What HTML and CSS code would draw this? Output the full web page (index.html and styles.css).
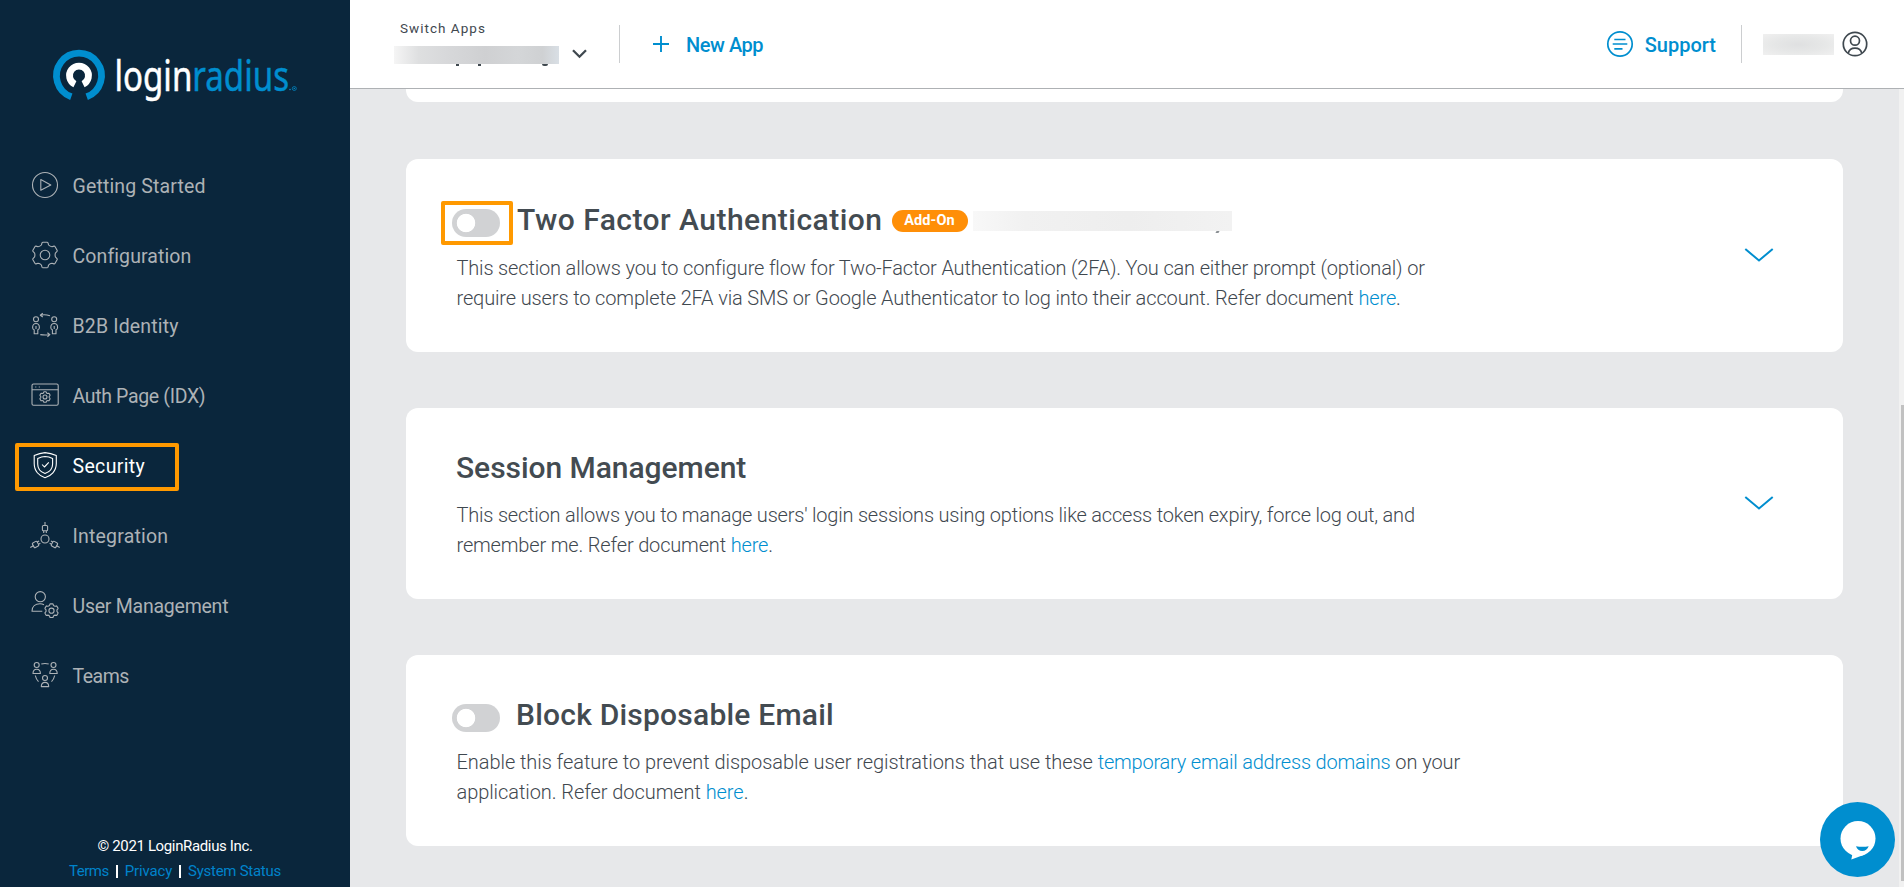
FILE: index.html
```html
<!DOCTYPE html>
<html lang="en">
<head>
<meta charset="utf-8">
<title>LoginRadius - Security</title>
<link rel="stylesheet" href="styles.css">
</head>
<body>
<svg class="defs" aria-hidden="true">
  <symbol id="gear" viewBox="-14 -14 28 28" overflow="visible">
    <path vector-effect="non-scaling-stroke" d="M-3 -12.2Q-2.8 -12.8 -2 -12.8H2Q2.8 -12.8 3 -12.2L3.6 -10Q5 -8.4 6.9 -8.3L9 -8.9Q9.7 -9 10.1 -8.3L12.1 -4.8Q12.4 -4.1 12 -3.6L10.4 -1.9Q9.8 0 10.4 1.9L12 3.6Q12.4 4.1 12.1 4.8L10.1 8.3Q9.7 9 9 8.9L6.9 8.3Q5 8.4 3.6 10L3 12.2Q2.8 12.8 2 12.8H-2Q-2.8 12.8 -3 12.2L-3.6 10Q-5 8.4 -6.9 8.3L-9 8.9Q-9.7 9 -10.1 8.3L-12.1 4.8Q-12.4 4.1 -12 3.6L-10.4 1.9Q-9.8 0 -10.4 -1.9L-12 -3.6Q-12.4 -4.1 -12.1 -4.8L-10.1 -8.3Q-9.7 -9 -9 -8.9L-6.9 -8.3Q-5 -8.4 -3.6 -10Z"/>
    <circle vector-effect="non-scaling-stroke" r="4.8"/>
  </symbol>
</svg>
<div class="app">
  <aside class="sidebar">
    <div class="logo">
      <svg width="250" height="70" viewBox="50 44 250 70">
        <path d="M71.3 96.8A22.5 22.5 0 1 1 86.7 96.8" fill="none" stroke="#008ecf" stroke-width="6.8"/>
        <path d="M74.9 84.2A9.5 9.5 0 1 1 83.1 84.2" fill="none" stroke="#fff" stroke-width="6.8"/>
        <text class="logo-text" x="114.5" y="91" textLength="174.500" lengthAdjust="spacingAndGlyphs"><tspan class="w">login</tspan><tspan class="b">radius</tspan></text>
        <circle cx="294.3" cy="88.5" r="2" fill="none" stroke="#008ecf" stroke-width=".7"/>
        <circle cx="294.3" cy="88.5" r=".7" fill="#008ecf"/>
        <circle cx="290" cy="89.500" r=".8" fill="#008ecf"/>
      </svg>
    </div>
    <nav class="nav">
      <a class="item started"><svg class="ico" viewBox="0 0 32 32"><circle cx="16" cy="16" r="12.5"/><path d="M11.8 10.6V21.2L21.8 15.9Z"/></svg><span>Getting Started</span></a>
      <a class="item config"><svg class="ico" viewBox="0 0 32 32"><use href="#gear" x="2" y="2" width="28" height="28"/></svg><span>Configuration</span></a>
      <a class="item b2b"><svg class="ico" viewBox="0 0 32 32"><circle cx="7" cy="10.3" r="2.5"/><circle cx="25.2" cy="10.3" r="2.5"/><path d="M7 14.5c-2.1 0-3.4 1.7-3.4 4 0 1.2.6 2 1.6 2.3v3.9h3.6v-3.9c1-.3 1.6-1.1 1.6-2.3 0-2.3-1.3-4-3.4-4zM25.2 14.5c-2.1 0-3.4 1.7-3.4 4 0 1.2.6 2 1.6 2.3v3.9H27v-3.9c1-.3 1.6-1.1 1.6-2.3 0-2.3-1.3-4-3.4-4zM7 17v3M25.2 17v3M21 6.8Q16 5.2 11.5 6.2M13.8 4.2L11.3 6.2L13.8 8M11.3 25.6Q16 26.4 20.7 25.7M18.4 23.7L20.9 25.7L18.4 27.8"/></svg><span>B2B Identity</span></a>
      <a class="item auth"><svg class="ico" viewBox="0 0 32 32"><rect x="3" y="5" width="26.2" height="21.3" rx="1.5"/><path d="M3 10.8H29.2M6.3 8h1M9.8 8h1"/><use href="#gear" x="10.2" y="12.2" width="11.6" height="11.6"/></svg><span>Auth Page (IDX)</span></a>
      <a class="item security active"><svg class="ico" viewBox="0 0 32 32"><path d="M16 3.6C19.5 3.8 24 5 27.3 6.6V14.5C27.3 22 22 27 16 28.7C10 27 5.2 22 5.2 14.5V6.6C8.5 5 12.5 3.8 16 3.6ZM16 7.5C19 7.6 21.5 8.4 23.6 9.4V15C23.6 20 20.5 23 16 24.5C11.5 23 8.7 20 8.7 15V9.4C11 8.4 13.5 7.6 16 7.5ZM13.1 15.5L15.4 18L19.8 13.3"/></svg><span>Security</span></a>
      <a class="item integ"><svg class="ico" viewBox="0 0 32 32"><circle cx="16" cy="20" r="4"/><g id="plug"><rect x="13.4" y="6.5" width="5.2" height="5.2" rx="1"/><path d="M16 3v3.500M14.7 11.7v2.2M17.3 11.7v2.2"/></g><use href="#plug" transform="rotate(120 16 20)"/><use href="#plug" transform="rotate(240 16 20)"/></svg><span>Integration</span></a>
      <a class="item users"><svg class="ico" viewBox="0 0 32 32"><circle cx="11.3" cy="7.7" r="5.1"/><path d="M13.3 22.3H3C3 17.5 6.5 14.8 11 14.8Q13.2 14.8 15 15.8"/><use href="#gear" x="15" y="14.2" width="15" height="15"/></svg><span>User Management</span></a>
      <a class="item teams"><svg class="ico" viewBox="0 0 32 32"><circle cx="7.7" cy="6" r="2.5"/><circle cx="24.5" cy="6" r="2.5"/><circle cx="16" cy="19" r="2.5"/><path d="M4 14.5C4 8.8 11.4 8.8 11.4 14.5ZM20.8 14.5C20.8 8.8 28.2 8.8 28.2 14.5ZM12.3 27.6C12.3 21.9 19.7 21.9 19.7 27.6ZM12.3 5Q16 3.9 19.7 5M6.3 16.5Q7 20 9.5 22.6M25.7 16.5Q25 20 22.5 22.6"/></svg><span>Teams</span></a>
    </nav>
    <footer class="foot">
      <div class="copy">© 2021 LoginRadius Inc.</div>
      <div class="links"><a class="l-terms">Terms</a><i></i><a class="l-privacy">Privacy</a><i></i><a class="l-status">System Status</a></div>
    </footer>
    <div class="mark mark-nav"></div>
  </aside>
  <div class="content">
    <header class="top">
      <div class="switch"><div class="switch-label">Switch Apps</div><div class="redact redact-app"></div><div class="crumbs"><b></b><b></b><b></b></div></div>
      <svg class="caret" width="17" height="12" viewBox="0 0 17 12"><path d="M2 2.2L8.5 8.7L15 2.2" fill="none" stroke="#3f484f" stroke-width="2.3"/></svg>
      <div class="rule"></div>
      <svg class="plus" width="18" height="18" viewBox="0 0 18 18"><path d="M9 1V17M1 9H17" stroke="#008ecf" stroke-width="1.9"/></svg>
      <a class="top-link newapp">New App</a>
      <svg class="support-ico" width="28" height="28" viewBox="0 0 28 28" fill="none" stroke="#008ecf" stroke-width="1.7"><circle cx="14" cy="14" r="12.2"/><path d="M8.3 9.5H19.5M6.7 14H21.3M8.3 18.8H16.5"/></svg>
      <a class="top-link support">Support</a>
      <div class="rule rule-user"></div>
      <div class="redact redact-user"></div>
      <svg class="user-ico" width="26" height="26" viewBox="0 0 26 26" fill="none" stroke="#3f484f" stroke-width="1.7"><circle cx="13" cy="13" r="11.7"/><circle cx="13" cy="9.7" r="4.5"/><path d="M6.3 22C7 18.8 9.6 17.1 13 17.1S19 18.8 19.7 22"/></svg>
    </header>
    <div class="scroll">
      <main class="cards">
        <section class="card card-cut"></section>
        <section class="card card-2fa">
          <div class="body">
            <div class="head"><span class="toggle"><b class="mark mark-toggle"></b></span><h2 class="t-2fa">Two Factor Authentication</h2><span class="badge">Add-On</span><span class="redact redact-note"></span></div>
            <p><span class="a1">This section allows you to configure flow for Two-Factor Authentication (2FA). You can either prompt (optional) or</span><br><span class="a2">require users to complete 2FA via SMS or Google Authenticator to log into their account. Refer document <a>here</a>.</span></p>
          </div>
          <svg class="chev" width="30" height="16" viewBox="0 0 30 16"><path d="M1.3 2L15 13.5L28.7 2"/></svg>
        </section>
        <section class="card">
          <div class="body">
            <div class="head"><h2 class="t-session">Session Management</h2></div>
            <p><span class="b1">This section allows you to manage users' login sessions using options like access token expiry, force log out, and</span><br><span class="b2">remember me. Refer document <a>here</a>.</span></p>
          </div>
          <svg class="chev" width="30" height="16" viewBox="0 0 30 16"><path d="M1.3 2L15 13.5L28.7 2"/></svg>
        </section>
        <section class="card">
          <div class="body">
            <div class="head"><span class="toggle"></span><h2 class="t-email">Block Disposable Email</h2></div>
            <p><span class="c1">Enable this feature to prevent disposable user registrations that use these <a>temporary email address domains</a> on your</span><br><span class="c2">application. Refer document <a>here</a>.</span></p>
          </div>
        </section>
      </main>
      <div class="bar"><div class="thumb"></div></div>
    </div>
  </div>
</div>
<div class="chat"><svg width="75" height="75" viewBox="0 0 75 75"><circle cx="37.5" cy="37.5" r="37.5" fill="#008ecf"/><circle cx="38" cy="36.5" r="17.5" fill="#fff"/><path d="M32.5 51.5L31.3 57.5L45 52.5Z" fill="#fff"/><path d="M36 44.3C40 45 45 45 48.7 44.3C47.5 47.5 45.3 49 42.3 49C39.3 49 37 47.3 36 44.3Z" fill="#008ecf"/></svg></div>
</body>
</html>
```
FILE: styles.css
```css
* { box-sizing: border-box; }
body {
  margin: 0;
  height: 887px;
  overflow: hidden;
  font-family: Roboto, "Liberation Sans", sans-serif;
  color: #3f484f;
  background: #e7e8ea;
}
.defs { display: none; }
.app { display: flex; height: 887px; }

/* Sidebar */
.sidebar {
  position: relative;
  width: 350px;
  flex: none;
  display: flex;
  flex-direction: column;
  background: #0a263c;
}
.logo { height: 151px; padding: 44px 0 0 50px; }
.logo svg { display: block; overflow: visible; }
.logo-text { font-family: "Noto Sans", "Open Sans", sans-serif; font-size: 41px; stroke-width: .5; }
.logo-text .w { fill: #fff; stroke: #fff; }
.logo-text .b { fill: #008ecf; stroke: #008ecf; }
.nav { display: flex; flex-direction: column; }
.item {
  display: flex;
  align-items: center;
  gap: 11.5px;
  height: 70px;
  padding-left: 29px;
  font-size: 19.5px;
  color: #adb2b6;
}
.item.active { color: #fff; }
.ico {
  width: 32px;
  height: 32px;
  margin-bottom: 2px;
  overflow: visible;
  fill: none;
  stroke: currentColor;
  stroke-width: 1.1;
  stroke-linejoin: round;
}
.started { letter-spacing: .14px; }
.config { letter-spacing: .1px; }
.b2b { letter-spacing: .15px; }
.auth { letter-spacing: -.34px; }
.security { letter-spacing: .35px; }
.integ { letter-spacing: .2px; }
.users { letter-spacing: -.24px; }
.teams { letter-spacing: -.5px; }
.foot { margin-top: auto; padding-bottom: 3px; font-size: 15px; line-height: 25px; text-align: center; }
.copy { color: #fff; letter-spacing: -.36px; }
.links { display: flex; justify-content: center; align-items: center; color: #0083cb; }
.links i { width: 2px; height: 13px; margin: 0 7px; background: #fff; }
.l-terms { letter-spacing: -.5px; }
.l-privacy { letter-spacing: -.15px; }
.l-status { letter-spacing: -.27px; }
.mark { position: absolute; border: 4px solid #f90; border-radius: 2px; }
.mark-nav { left: 15px; top: 443px; width: 164px; height: 48px; }
.mark-toggle { left: -11px; top: -8px; width: 72px; height: 44px; }

/* Top bar */
.content { flex: 1; display: flex; flex-direction: column; min-width: 0; }
.top {
  height: 89px;
  flex: none;
  display: flex;
  align-items: center;
  padding: 0 36px 1px 44px;
  background: #fff;
  border-bottom: 1px solid #aeb1b4;
}
.switch { width: 165px; height: 88px; padding-top: 18px; }
.switch-label { padding-left: 6px; font-size: 13.5px; line-height: 20px; letter-spacing: 1.02px; }
.redact-app {
  height: 18px;
  margin-top: 8px;
  background: linear-gradient(90deg, #f5f5f5, #dedfe0 15%, #d6d7d9 35%, #cfd0d2 55%, #d4d6d8 75%, #cfd1d3 90%, #d9dfe5);
}
.crumbs { display: flex; padding-left: 62px; }
.crumbs b { width: 3px; height: 2px; margin-right: 19px; background: #3f484f; }
.crumbs b:last-child { width: 6px; margin: 0 0 0 42px; border-radius: 0 0 3px 3px; }
.caret { margin: 21px 0 0 12px; }
.rule { width: 1px; height: 38px; margin-left: 31px; background: #ccced0; }
.plus { margin-left: 32px; }
.top-link { font-size: 20px; font-weight: 500; color: #008ecf; padding-top: 2px; }
.newapp { margin-left: 16px; letter-spacing: -.45px; }
.support-ico { margin-left: auto; }
.support { margin-left: 11px; letter-spacing: 0; }
.rule-user { margin-left: 25px; }
.redact-user { width: 71px; height: 21px; margin: 2px 8px 0 21px; background: radial-gradient(#dfe0e1, #e6e7e7 50%, #f0f0f0); }

/* Cards */
.scroll { flex: 1; display: flex; min-height: 0; }
.cards { flex: 1; padding: 0 56px; }
.card {
  display: flex;
  align-items: flex-start;
  justify-content: space-between;
  height: 191px;
  margin-bottom: 56px;
  padding: 40px 69px 0 46px;
  background: #fff;
  border-radius: 12px;
}
.card-cut { height: 13px; padding: 0; margin-bottom: 57px; border-radius: 0 0 12px 12px; }
.card-2fa { height: 193px; padding-top: 41px; }
.head { display: flex; height: 40px; }
.toggle {
  position: relative;
  width: 48px;
  height: 28px;
  margin: 9px 16px 0 0;
  border-radius: 14px;
  background: radial-gradient(circle at 14px 14px, #fff 8.8px, #d1d2d4 9.6px);
}
h2 { margin: 0; font-size: 30px; line-height: 40px; font-weight: 500; color: #434b51; }
.t-2fa { letter-spacing: .48px; margin-left: 1px; }
.t-session { letter-spacing: -.05px; margin-left: 4px; }
.t-email { letter-spacing: .22px; }
.badge {
  width: 76px;
  height: 22px;
  margin: 10px 5px 0 9px;
  border-radius: 11px;
  background: #ff8f08;
  color: #fff;
  font-size: 14.5px;
  line-height: 22px;
  font-weight: 700;
  letter-spacing: .1px;
  text-align: center;
}
.redact-note { width: 259px; height: 20px; margin-top: 11px; background: linear-gradient(90deg, #f8f8f8, #f1f1f1 20%, #eee 60%, #f2f2f2); }
.redact-note::after { content: ""; display: block; width: 3px; height: 2px; margin: 20px 0 0 243px; background: #8b9094; transform: skewX(-30deg); }
p { margin: 12px 0 0 4.5px; font-size: 20px; line-height: 30px; font-weight: 300; white-space: nowrap; }
.card-2fa p { margin-top: 13px; }
p a { color: #008ecf; }
.a1 { letter-spacing: -.165px; }
.a2 { letter-spacing: -.135px; }
.b1 { letter-spacing: -.21px; }
.b2 { letter-spacing: -.17px; }
.c1 { letter-spacing: -.06px; }
.c1 a { letter-spacing: -.21px; }
.c2 { letter-spacing: -.07px; }
.chev { margin-top: 47px; fill: none; stroke: #008ecf; stroke-width: 2; }

/* Scrollbar and chat launcher */
.bar { width: 5px; padding: 316px 0 0 2px; background: #f1f1f1; }
.thumb { height: 476px; background: #c1c1c1; }
.chat { position: fixed; left: 1820px; top: 802px; width: 75px; height: 75px; }
```
